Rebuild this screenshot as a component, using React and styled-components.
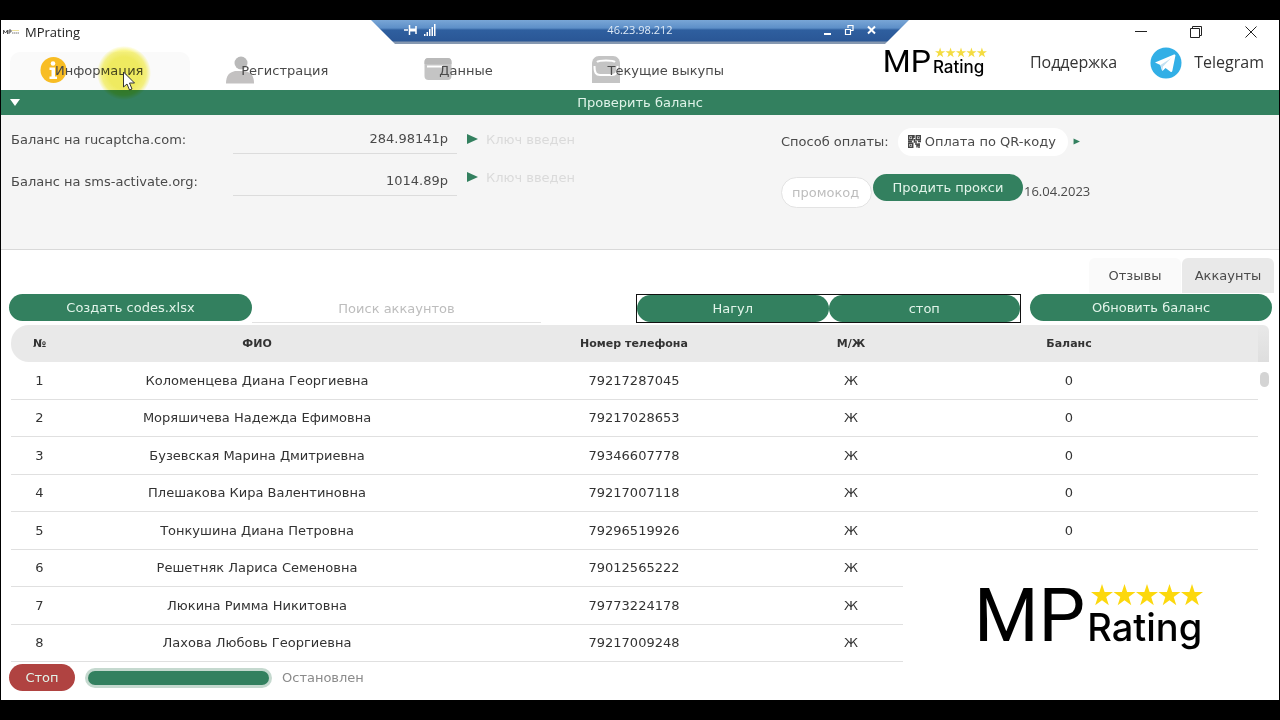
import React from "react";
import styled, { createGlobalStyle } from "styled-components";

const GREEN = "#33805f";
const VERDANA = '"DejaVu Sans", Verdana, sans-serif';
const SEGOE = '"Open Sans", "Segoe UI", sans-serif';

const GlobalStyle = createGlobalStyle`
  * { box-sizing: border-box; }
  body { margin: 0; background: #000; font-family: ${VERDANA}; font-size: 13px; color: #4a4a4a; }
  button, input, select { font: inherit; color: inherit; margin: 0; }
  button { cursor: pointer; }
`;

const Screen = styled.div`
  min-height: 100vh;
  padding: 20px 1px;
  background: #000;
`;

const Window = styled.div`
  position: relative;
  background: #fff;
  overflow: hidden;
`;

/* Title bar */
const TitleBar = styled.header`
  display: flex;
  align-items: center;
  height: 23px;
  padding: 0 20px 0 2px;
  gap: 5px;
  font-family: ${SEGOE};
  font-size: 13px;
  color: #222;
`;

const Title = styled.h1`
  flex: 1;
  margin: 0;
  font-size: 13px;
  font-weight: 400;
`;

const TinyMark = styled.svg`
  width: 17px;
  height: 6px;
`;

const WindowControls = styled.div`
  display: flex;
  gap: 39px;
`;

const ControlButton = styled.button`
  display: flex;
  width: 16px;
  height: 16px;
  padding: 0;
  border: 0;
  background: none;
  align-items: center;
  justify-content: center;
`;

const RemoteBar = styled.div`
  position: absolute;
  top: 0;
  left: 50%;
  width: 538px;
  height: 24px;
  transform: translateX(-50%);
  display: grid;
  grid-template-columns: 1fr auto 1fr;
  align-items: center;
  padding: 0 33px 5px;
  clip-path: polygon(0 0, 100% 0, 514px 100%, 24px 100%);
  background: linear-gradient(#79a6d6 0, #5d8fc8 8px, #2f5f9f 10px, #2a5796 21px, #8698b0 22px, #8698b0 100%);
  font-family: ${SEGOE};
  font-size: 11px;
  color: #dfeaf6;
`;

const RemoteTools = styled.div`
  display: flex;
  justify-content: ${(p) => (p.$end ? "flex-end" : "flex-start")};
  gap: 6px;
`;

/* Navigation */
const NavRow = styled.div`
  display: flex;
  height: 47px;
`;

const Nav = styled.nav`
  flex: 1;
  display: grid;
  grid-template-columns: 186fr 198fr 168fr 320fr;
  align-items: end;
  padding-left: 9px;
`;

const NavTab = styled.button`
  display: flex;
  align-items: center;
  height: 38px;
  margin-right: 6px;
  padding: 0 0 2px 30px;
  border: 0;
  border-radius: 10px 10px 0 0;
  background: ${(p) => (p.$active ? "#fafafa" : "transparent")};
  white-space: nowrap;
`;

const NavIcon = styled.svg`
  flex: none;
  width: 28px;
  height: 28px;
  margin-right: -13px;
`;

const NavLabel = styled.span`
  position: relative;
`;

const Links = styled.div`
  display: flex;
  align-items: flex-start;
  padding: 1px 15px 0 0;
  font-family: ${SEGOE};
  font-size: 16px;
  color: #333;
`;

const TextLink = styled.a`
  color: inherit;
  text-decoration: none;
  line-height: 36px;
  margin-left: ${(p) => p.$gap}px;
`;

const TelegramIcon = styled.svg`
  width: 32px;
  height: 32px;
  margin: 3px 0 0 33px;
`;

/* Brand */
const Brand = styled.div`
  display: flex;
  align-items: flex-start;
  color: #000;
`;

const BrandMain = styled.span`
  font-family: Roboto, sans-serif;
  font-size: ${(p) => (p.$large ? 74 : 32)}px;
  line-height: ${(p) => (p.$large ? 72 : 34)}px;
`;

const BrandSide = styled.span`
  display: flex;
  flex-direction: column;
  padding-top: ${(p) => (p.$large ? 4 : 3)}px;
  padding-left: 2px;
`;

const BrandSub = styled.span`
  font-family: Inter, sans-serif;
  font-weight: 500;
  font-size: ${(p) => (p.$large ? 38 : 17)}px;
  line-height: ${(p) => (p.$large ? 42 : 18)}px;
`;

const StarRow = styled.svg`
  width: ${(p) => (p.$large ? 112 : 52)}px;
  height: ${(p) => (p.$large ? 22 : 11)}px;
  margin-left: ${(p) => (p.$large ? 4 : 2)}px;
`;

/* Balance section */
const SectionBar = styled.button`
  display: grid;
  grid-template-columns: 20px 1fr 20px;
  align-items: center;
  width: 100%;
  height: 25px;
  padding: 0 9px;
  border: 0;
  background: ${GREEN};
  color: #dff3e8;
`;

const Panel = styled.section`
  display: flex;
  height: 135px;
  padding: 10px 10px 0;
  background: #f5f5f5;
  border-bottom: 1px solid #d9d9d9;
`;

const Balances = styled.div`
  width: 446px;
`;

const BalanceRow = styled.div`
  display: flex;
  justify-content: space-between;
  height: 42px;
  line-height: 30px;
`;

const BalanceInput = styled.input`
  width: 224px;
  height: 29px;
  padding: 0 9px;
  border: 0;
  border-bottom: 1px solid #dcdcdc;
  background: transparent;
  text-align: right;
  outline: 0;
`;

const Keys = styled.div`
  flex: 1;
  padding-left: 9px;
`;

const KeyRow = styled.div`
  display: flex;
  align-items: center;
  gap: 8px;
  height: 28px;
  margin-bottom: 10px;
`;

const KeyInput = styled.input`
  width: 120px;
  padding: 0;
  border: 0;
  background: transparent;
  &::placeholder { color: #dadada; opacity: 1; }
`;

const ArrowButton = styled.button`
  display: flex;
  padding: 0;
  border: 0;
  background: none;
  color: ${GREEN};
`;

const Payment = styled.div`
  width: 488px;
`;

const PayRow = styled.div`
  display: flex;
  align-items: center;
  height: 33px;
`;

const MethodBox = styled.div`
  display: flex;
  align-items: center;
  gap: 4px;
  height: 28px;
  margin: 0 5px 0 9px;
  padding: 0 11px 0 10px;
  border-radius: 14px;
  background: #fff;
`;

const MethodSelect = styled.select`
  appearance: none;
  padding: 0;
  border: 0;
  background: transparent;
`;

const PromoRow = styled.div`
  display: flex;
  align-items: flex-start;
  margin-top: 16px;
`;

const PromoInput = styled.input`
  width: 91px;
  height: 31px;
  margin: 3px 1px 0 0;
  padding: 0 10px;
  border: 1px solid #e3e3e3;
  border-radius: 16px;
  background: #fff;
  &::placeholder { color: #bdbdbd; opacity: 1; }
`;

const DateText = styled.time`
  font-family: ${SEGOE};
  font-size: 13px;
  line-height: 34px;
  padding-left: 1px;
`;

const PillButton = styled.button`
  height: 27px;
  width: ${(p) => (p.$width ? p.$width + "px" : "auto")};
  flex: ${(p) => (p.$grow ? 1 : "none")};
  padding: 0;
  border: 0;
  border-radius: 14px;
  background: ${(p) => (p.$danger ? "#b04341" : GREEN)};
  color: #e2f4ea;
`;

/* Accounts */
const Tabs = styled.div`
  display: flex;
  justify-content: flex-end;
  gap: 1px;
  padding: 8px 5px 0;
`;

const Tab = styled.button`
  width: 92px;
  height: 35px;
  padding: 0;
  border: 0;
  border-radius: 6px 6px 0 0;
  background: ${(p) => (p.$active ? "#e9e9e9" : "#fafafa")};
`;

const Toolbar = styled.div`
  display: flex;
  align-items: flex-start;
  height: 30px;
  padding: 1px 7px 0 8px;
`;

const Search = styled.input`
  flex: 0 1 289px;
  height: 29px;
  padding: 0;
  border: 0;
  border-bottom: 1px solid #e2e2e2;
  text-align: center;
  &::placeholder { color: #bdbdbd; opacity: 1; }
`;

const Spacer = styled.div`
  flex: 1;
`;

const ButtonPair = styled.div`
  display: flex;
  width: 385px;
  margin-right: 9px;
  border: 1px solid #111;
`;

const TableArea = styled.div`
  display: flex;
  padding: 2px 10px 0;
`;

const Table = styled.table`
  flex: 1;
  border-collapse: separate;
  border-spacing: 0;
  table-layout: fixed;
`;

const HeadCell = styled.th`
  height: 37px;
  padding: 0;
  background: #e9e9e9;
  font-size: 11px;
  color: #333;
  &:first-child { border-radius: 18px 0 0 18px; }
`;

const Row = styled.tr`
  height: ${(p) => (p.$tall ? 38 : 37)}px;
`;

const Cell = styled.td`
  padding: 0 0 1px;
  border-bottom: 1px solid #e0e0e0;
  text-align: center;
  color: #333;
`;

const ScrollTrack = styled.div`
  width: 11px;
`;

const ScrollHead = styled.div`
  height: 37px;
  border-radius: 0 6px 0 0;
  background: linear-gradient(#e9e9e9, #dedede);
`;

const ScrollThumb = styled.div`
  width: 9px;
  height: 15px;
  margin: 10px 0 0 2px;
  border-radius: 5px;
  background: #d4d4d4;
`;

const StatusBar = styled.footer`
  display: flex;
  align-items: center;
  height: 38px;
  padding: 0 8px 7px;
  gap: 10px;
  color: #8a8a8a;
`;

const Progress = styled.progress`
  appearance: none;
  width: 187px;
  height: 20px;
  padding: 3px;
  border: 0;
  border-radius: 10px;
  background: #c5d9cf;
  &::-webkit-progress-bar { background: #c5d9cf; border-radius: 7px; }
  &::-webkit-progress-value { background: ${GREEN}; border-radius: 7px; }
`;

/* Overlays */
const Watermark = styled.div`
  position: absolute;
  right: 0;
  bottom: 0;
  width: 376px;
  height: 148px;
  padding: 28px 0 0 71px;
  background: #fff;
`;

const Highlight = styled.div`
  position: absolute;
  left: 96px;
  top: 26px;
  width: 54px;
  height: 54px;
  border-radius: 50%;
  background: radial-gradient(circle, #f4ef62 0 42%, #f8f482 58%, #fff 71%);
  mix-blend-mode: multiply;
  pointer-events: none;
`;

const Pointer = styled.svg`
  position: absolute;
  left: 121px;
  top: 51px;
  width: 14px;
  height: 20px;
  pointer-events: none;
`;

const STAR = "M11 0l2.600 8.100h8.400l-6.800 5 2.600 8.100L11 16.200l-6.800 5 2.600-8.100L0 8.100h8.400z";

function Logo({ large }) {
  return (
    <Brand>
      <BrandMain $large={large}>MP</BrandMain>
      <BrandSide $large={large}>
        <StarRow $large={large} viewBox="0 0 112 22" aria-hidden="true">
          {[0, 1, 2, 3, 4].map((i) => (
            <path key={i} d={STAR} transform={`translate(${i * 22.5} 0)`} fill={large ? "#fcd80d" : "#f4dc42"} />
          ))}
        </StarRow>
        <BrandSub $large={large}>Rating</BrandSub>
      </BrandSide>
    </Brand>
  );
}

const InfoIcon = () => (
  <NavIcon viewBox="0 0 28 28" aria-hidden="true">
    <circle cx="13.5" cy="14" r="13" fill="#f8bd24" />
    <circle cx="13" cy="7.5" r="2.3" fill="#fff" />
    <path d="M9.5 11.5h5.5v9h2v2.5H9.500v-2.500h2v-6.500h-2z" fill="#fff" />
  </NavIcon>
);

const PersonIcon = () => (
  <NavIcon viewBox="0 0 28 28" aria-hidden="true">
    <circle cx="15" cy="7" r="6.500" fill="#b9b9b9" />
    <path d="M0 27.500c0-8 3-11 9-12.500h10c6 1.500 9 4.500 9 12.500z" fill="#c3c1c1" />
  </NavIcon>
);

const CardIcon = () => (
  <NavIcon viewBox="0 0 28 28" aria-hidden="true">
    <rect x="0.500" y="2" width="27" height="22" rx="4" fill="#c4c4c4" />
    <path d="M0.500 8V6a4 4 0 0 1 4-4h19a4 4 0 0 1 4 4v2z" fill="#b9b9b9" />
    <path d="M3 10.500h16" stroke="#fff" strokeWidth="2" />
  </NavIcon>
);

const BagIcon = () => (
  <NavIcon viewBox="0 0 28 28" aria-hidden="true">
    <path d="M0 27V8c0-5 3-8 7-8h14c4 0 7 3 7 8v19z" fill="#c4c4c4" />
    <path d="M5 6c2-2 16-2 18 0" fill="none" stroke="#fff" strokeWidth="2" />
    <path d="M2.500 10c0 7 1.500 9 5.500 9h12c4 0 5.500-2 5.500-9" fill="none" stroke="#fff" strokeWidth="2" />
  </NavIcon>
);

const Triangle = ({ size = 12 }) => (
  <svg width={size} height={size} viewBox="0 0 12 12" aria-hidden="true">
    <path d="M1 1l11 5-11 5z" fill="currentColor" />
  </svg>
);

const QrIcon = () => (
  <svg width="13" height="13" viewBox="0 0 13 13" aria-hidden="true">
    <path
      d="M.7.7h4v4h-4zM8.300.7h4v4h-4zM.7 8.300h4v4h-4zM6 0v3M6.500 4v3H9M0 6.500h4M10 6.500h3M7 9h2v3.500M11 8v5M9 10h3"
      fill="none" stroke="#454545" strokeWidth="1.500"
    />
    <path d="M2 2h1.500v1.500H2zM9.600 2h1.500v1.500H9.600zM2 9.600h1.500v1.500H2z" fill="#454545" />
  </svg>
);

const NAV = [
  { label: "Информация", Icon: InfoIcon, active: true },
  { label: "Регистрация", Icon: PersonIcon },
  { label: "Данные", Icon: CardIcon },
  { label: "Текущие выкупы", Icon: BagIcon },
];

const BALANCES = [
  { id: "rucaptcha", label: "Баланс на rucaptcha.com:", value: "284.98141р" },
  { id: "sms", label: "Баланс на sms-activate.org:", value: "1014.89р" },
];

const COLUMNS = [
  { title: "№", width: 57 },
  { title: "ФИО", width: 378 },
  { title: "Номер телефона", width: 376 },
  { title: "М/Ж", width: 58 },
  { title: "Баланс", width: 378 },
];

const ACCOUNTS = [
  ["Коломенцева Диана Георгиевна", "79217287045", "Ж", "0"],
  ["Моряшичева Надежда Ефимовна", "79217028653", "Ж", "0"],
  ["Бузевская Марина Дмитриевна", "79346607778", "Ж", "0"],
  ["Плешакова Кира Валентиновна", "79217007118", "Ж", "0"],
  ["Тонкушина Диана Петровна", "79296519926", "Ж", "0"],
  ["Решетняк Лариса Семеновна", "79012565222", "Ж", ""],
  ["Люкина Римма Никитовна", "79773224178", "Ж", ""],
  ["Лахова Любовь Георгиевна", "79217009248", "Ж", ""],
];

export default function App() {
  return (
    <Screen>
      <GlobalStyle />
      <Window>
        <TitleBar>
          <TinyMark viewBox="0 0 17 6" aria-hidden="true">
            <path d="M.5 5V1l2 3 2-3v4M6 5V1h2v2H6" fill="none" stroke="#555" />
            <path d="M9 4h7" stroke="#777" strokeDasharray="1.500 .5" />
            <path d="M9 1.500h7" stroke="#efe3a0" />
          </TinyMark>
          <Title>MPrating</Title>
          <WindowControls>
            <ControlButton aria-label="Свернуть">
              <svg width="12" height="12" viewBox="0 0 12 12"><path d="M0 5.500h12" stroke="#222" /></svg>
            </ControlButton>
            <ControlButton aria-label="Развернуть">
              <svg width="12" height="12" viewBox="0 0 12 12" fill="none" stroke="#222">
                <path d="M.5 2.500h9v9h-9zM2.500 2.500v-2h9v9h-2" />
              </svg>
            </ControlButton>
            <ControlButton aria-label="Закрыть">
              <svg width="12" height="12" viewBox="0 0 12 12"><path d="M.5.5l11 11M11.500.5l-11 11" stroke="#222" /></svg>
            </ControlButton>
          </WindowControls>
        </TitleBar>

        <NavRow>
          <Nav>
            {NAV.map(({ label, Icon, active }) => (
              <NavTab key={label} $active={active}>
                <Icon />
                <NavLabel>{label}</NavLabel>
              </NavTab>
            ))}
          </Nav>
          <Links>
            <Logo />
            <TextLink href="#support" $gap={43}>Поддержка</TextLink>
            <TelegramIcon viewBox="0 0 32 32" aria-hidden="true">
              <circle cx="16" cy="16" r="15.500" fill="#32afe6" />
              <path d="M5 15.500L24 7.500c1-.3 1.600.3 1.400 1.300L22.300 24c-.2 1-1 1.200-1.800.7l-5-3.700-2.500 2.500c-.6.6-1 .3-1.200-.4L10.300 18z" fill="#fff" />
              <path d="M10.500 18L21 11.300l-8 8.200-.6 4z" fill="#c3e1f2" />
            </TelegramIcon>
            <TextLink href="#telegram" $gap={12}>Telegram</TextLink>
          </Links>
        </NavRow>

        <SectionBar>
          <svg width="10" height="7" viewBox="0 0 10 7" aria-hidden="true"><path d="M0 0h10L5 7z" fill="#fff" /></svg>
          <span>Проверить баланс</span>
        </SectionBar>

        <Panel>
          <Balances>
            {BALANCES.map((b) => (
              <BalanceRow key={b.id}>
                <label htmlFor={b.id}>{b.label}</label>
                <BalanceInput id={b.id} value={b.value} readOnly />
              </BalanceRow>
            ))}
          </Balances>
          <Keys>
            {BALANCES.map((b) => (
              <KeyRow key={b.id}>
                <ArrowButton aria-label="Показать ключ"><Triangle /></ArrowButton>
                <KeyInput aria-label="Ключ" placeholder="Ключ введен" />
              </KeyRow>
            ))}
          </Keys>
          <Payment>
            <PayRow>
              <label htmlFor="method">Способ оплаты:</label>
              <MethodBox>
                <QrIcon />
                <MethodSelect id="method"><option>Оплата по QR-коду</option></MethodSelect>
              </MethodBox>
              <ArrowButton aria-label="Далее"><Triangle size={7} /></ArrowButton>
            </PayRow>
            <PromoRow>
              <PromoInput aria-label="Промокод" placeholder="промокод" />
              <PillButton $width={150}>Продить прокси</PillButton>
              <DateText>16.04.2023</DateText>
            </PromoRow>
          </Payment>
        </Panel>

        <Tabs>
          <Tab>Отзывы</Tab>
          <Tab $active>Аккаунты</Tab>
        </Tabs>
        <Toolbar>
          <PillButton $width={243}>Создать codes.xlsx</PillButton>
          <Search aria-label="Поиск аккаунтов" placeholder="Поиск аккаунтов" />
          <Spacer />
          <ButtonPair>
            <PillButton $grow>Нагул</PillButton>
            <PillButton $grow>стоп</PillButton>
          </ButtonPair>
          <PillButton $width={242}>Обновить баланс</PillButton>
        </Toolbar>

        <TableArea>
          <Table>
            <colgroup>
              {COLUMNS.map((c) => <col key={c.title} width={c.width} />)}
            </colgroup>
            <thead>
              <tr>{COLUMNS.map((c) => <HeadCell key={c.title} scope="col">{c.title}</HeadCell>)}</tr>
            </thead>
            <tbody>
              {ACCOUNTS.map((row, i) => (
                <Row key={row[1]} $tall={i % 2 === 0}>
                  <Cell>{i + 1}</Cell>
                  {row.map((value, j) => <Cell key={j}>{value}</Cell>)}
                </Row>
              ))}
            </tbody>
          </Table>
          <ScrollTrack>
            <ScrollHead />
            <ScrollThumb />
          </ScrollTrack>
        </TableArea>

        <StatusBar>
          <PillButton $danger $width={66}>Стоп</PillButton>
          <Progress value={100} max={100} aria-label="Ход выполнения" />
          <span>Остановлен</span>
        </StatusBar>

        <RemoteBar>
          <RemoteTools>
            <svg width="14" height="12" viewBox="0 0 14 12" stroke="#fff" fill="none">
              <path d="M0 6h4M5.500 1v10M6 6h6M12 2v8" strokeWidth="1.500" /><path d="M6 6h6" strokeWidth="3" />
            </svg>
            <svg width="12" height="12" viewBox="0 0 12 12" fill="#fff">
              <path d="M0 10h1.500v2H0zM2.500 8H4v4H2.500zM5 5h1.500v7H5zM7.500 3H9v9H7.500zM10 0h1.500v12H10z" />
            </svg>
          </RemoteTools>
          <span>46.23.98.212</span>
          <RemoteTools $end>
            <svg width="53" height="12" viewBox="0 0 53 12" fill="none" stroke="#fff">
              <path d="M1 10h7" strokeWidth="2" />
              <path d="M22.500 5.500h5v5h-5zM25 4V1.500h5v5h-2" strokeWidth="1.200" />
              <path d="M45 2.500l7 7M52 2.500l-7 7" strokeWidth="2" />
            </svg>
          </RemoteTools>
        </RemoteBar>

        <Watermark><Logo large /></Watermark>
        <Highlight />
        <Pointer viewBox="0 0 14 20" aria-hidden="true">
          <path d="M1.500 1v15l3.500-3 2.500 6 2.500-1-2.500-6h5z" fill="#fff" stroke="#333" />
        </Pointer>
      </Window>
    </Screen>
  );
}
